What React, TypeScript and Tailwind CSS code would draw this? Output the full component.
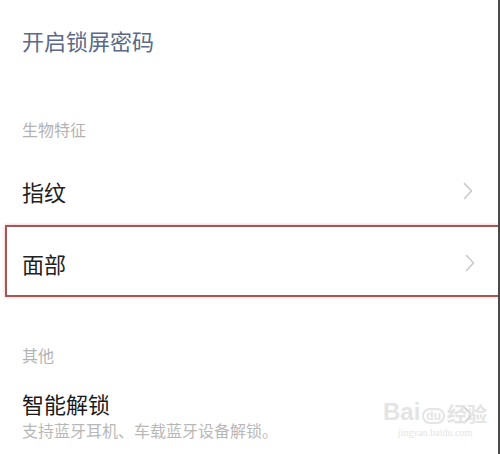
import React from 'react';

function Chevron() {
  return (
    <svg width="10" height="18" viewBox="0 0 10 18" fill="none" className="flex-shrink-0">
      <path d="M1.5 1.5 L8.5 9 L1.5 16.5" stroke="#c9c9c9" strokeWidth="1.6" strokeLinecap="round" strokeLinejoin="round" />
    </svg>
  );
}

export default function App() {
  return (
    <div
      className="relative w-[500px] h-[454px] overflow-hidden bg-white border-r-2 border-[#4a4a4a]"
      style={{ fontFamily: '"Noto Sans CJK SC", "Noto Sans", sans-serif' }}
    >
      {/* Top action */}
      <div className="pt-[26px] pl-[22px] text-[22px] leading-[28px] text-[#5a6a88]">开启锁屏密码</div>

      {/* Biometrics */}
      <div className="mt-[65px] pl-[22px] text-[16px] leading-[20px] text-[#b3b3b3]">生物特征</div>

      <div className="mt-[38px] flex items-center justify-between pl-[22px] pr-[25px]">
        <span className="text-[22px] leading-[28px] text-[#222]">指纹</span>
        <Chevron />
      </div>

      <div className="mt-[20px] ml-[5px] h-[72px] flex items-center justify-between pl-[15px] pr-[23px] pt-[4px] border-2 border-r-0 border-[#a35757] shadow-[0_0_3px_rgba(220,120,120,0.5)]">
        <span className="text-[22px] leading-[28px] text-[#222]">面部</span>
        <Chevron />
      </div>

      {/* Others */}
      <div className="mt-[48px] pl-[22px] text-[16px] leading-[20px] text-[#b3b3b3]">其他</div>

      <div className="mt-[24px] flex items-center justify-between pl-[22px] pr-[25px]">
        <div>
          <div className="text-[22px] leading-[28px] text-[#1a1a1a]">智能解锁</div>
          <div className="mt-[3px] text-[16px] leading-[20px] text-[#b8b8b8]">支持蓝牙耳机、车载蓝牙设备解锁。</div>
        </div>
        <Chevron />
      </div>

      {/* watermark */}
      <div className="absolute left-[383px] top-[400px] flex flex-col items-center text-[#e4e4e4] pointer-events-none">
        <div className="flex items-end gap-[2px] leading-none">
          <span className="text-[24px] font-bold" style={{ fontFamily: '"Liberation Sans", sans-serif' }}>Bai</span>
          <span className="text-[12px] font-bold rounded-full border-2 border-[#e4e4e4] px-[2px]" style={{ fontFamily: '"Liberation Sans", sans-serif' }}>du</span>
          <span className="text-[20px] font-bold">经验</span>
        </div>
        <div className="text-[10px] leading-[14px] mt-[2px]" style={{ fontFamily: '"Liberation Serif", serif' }}>jingyan.baidu.com</div>
      </div>
    </div>
  );
}
